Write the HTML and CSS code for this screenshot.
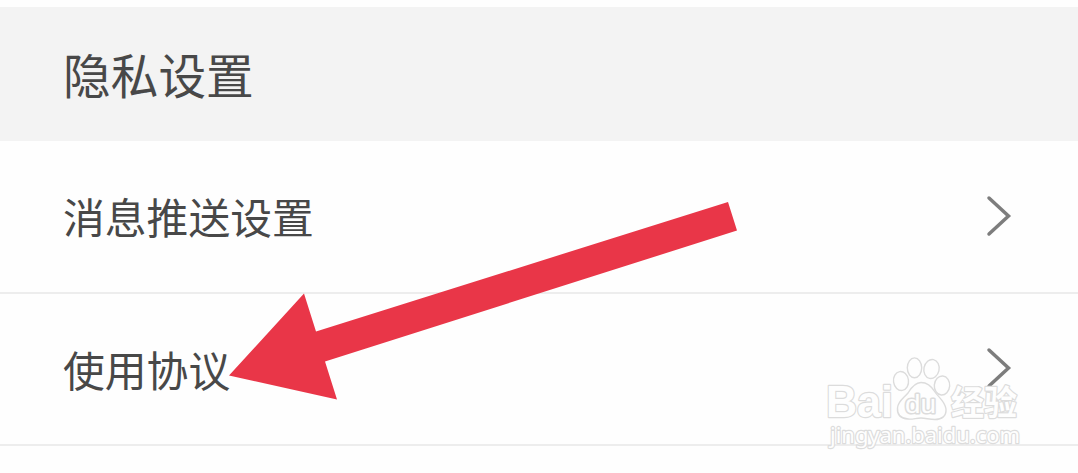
FILE: index.html
```html
<!DOCTYPE html>
<html lang="zh-CN">

<head>
  <meta charset="utf-8" />
  <meta name="viewport" content="width=device-width, initial-scale=1" />
  <title>隐私设置</title>
  <link rel="stylesheet" href="styles.css">
</head>

<body>
  <h1 class="title">隐私设置</h1>

  <div class="list">
    <div class="line">
      <div class="lineitem">消息推送设置</div>
      <svg class="chevron" viewBox="0 0 26 42">
        <path d="M3 3L22.500 21L3 39" />
      </svg>
    </div>

    <div class="line">
      <div class="lineitem">使用协议</div>
      <svg class="chevron" viewBox="0 0 26 42">
        <path d="M3 3L22.500 21L3 39" />
      </svg>
    </div>
  </div>

  <!-- pointer over the agreement row -->
  <svg class="arrow" viewBox="0 0 508 198">
    <path d="M0 173.500L75 91.500L87 129.500L499 0L508 28.500L96 159.500L108 197.500Z" />
  </svg>

  <svg class="watermark" viewBox="0 0 210 110">
    <text class="brand" x="6" y="67" textLength="67" lengthAdjust="spacingAndGlyphs">Bai</text>
    <g class="paw">
      <ellipse cx="81" cy="31" rx="7.500" ry="9.500" transform="rotate(-8 81 31)" />
      <ellipse cx="94.500" cy="17.800" rx="7.200" ry="9.900" />
      <ellipse cx="111.500" cy="19" rx="7.600" ry="9.600" transform="rotate(12 111.500 19)" />
      <ellipse cx="122" cy="35.500" rx="7.700" ry="9.500" transform="rotate(5 122 35.500)" />
      <path d="M101 32.500C108 32.500 112 37 115 42C118 47 125 51 126 59C126.500 66 122 69.500 115 69.500C109 69.500 106 68 101 68C96 68 93 69.500 88 69C81 68.500 77 65 77.500 58C78 51 84 48 88 43C91 38 95 32.500 101 32.500Z" />
    </g>
    <text class="du" x="85" y="63" textLength="31" lengthAdjust="spacingAndGlyphs">du</text>
    <text class="cn" x="131" y="65" textLength="66" lengthAdjust="spacingAndGlyphs">经验</text>
    <text class="url" x="10" y="93" textLength="190" lengthAdjust="spacingAndGlyphs">jingyan.baidu.com</text>
  </svg>
</body>

</html>
```
FILE: styles.css
```css
body {
  position: relative;
  margin: 0;
  padding-top: 7px;
  height: 466px;
  overflow: hidden;
  background: #fefefe;
  color: #484848;
  font-family: "Noto Sans CJK SC", sans-serif;
}

.title {
  margin: 0;
  padding: 0 63px;
  height: 134px;
  line-height: 134px;
  background: #f3f3f3;
  font-size: 47.7px;
  font-weight: normal;
}

.line {
  display: flex;
  align-items: center;
  justify-content: space-between;
  box-sizing: border-box;
  height: 152px;
  padding: 0 65px 0 63px;
  border-bottom: 2px solid #ededed;
}

.line:first-child {
  height: 153px;
}

.lineitem {
  margin-top: -1px;
  font-size: 41.8px;
  line-height: 60px;
}

.chevron {
  width: 26px;
  height: 42px;
  margin-top: -2px;
  margin-right: 1px;
}

.chevron path {
  fill: none;
  stroke: #7d7d7d;
  stroke-width: 3.5;
  stroke-linecap: round;
}

.arrow {
  position: absolute;
  left: 229px;
  top: 202px;
  width: 508px;
  height: 198px;
  fill: #e93648;
}

.watermark {
  position: absolute;
  left: 820px;
  top: 350px;
  width: 210px;
  height: 110px;
  fill: #fefefe;
  stroke: #dcdcdc;
  stroke-width: 1.4;
}

.watermark text {
  paint-order: stroke;
  stroke-width: 2.4;
  stroke-linejoin: round;
}

.brand {
  font: bold 45px "Liberation Sans", sans-serif;
}

.watermark .du {
  font: 26px "Liberation Sans", sans-serif;
  stroke-width: 3;
}

.cn {
  font: bold 34px "Noto Sans CJK SC", sans-serif;
}

.url {
  font: 22px "Noto Sans", sans-serif;
}
```
